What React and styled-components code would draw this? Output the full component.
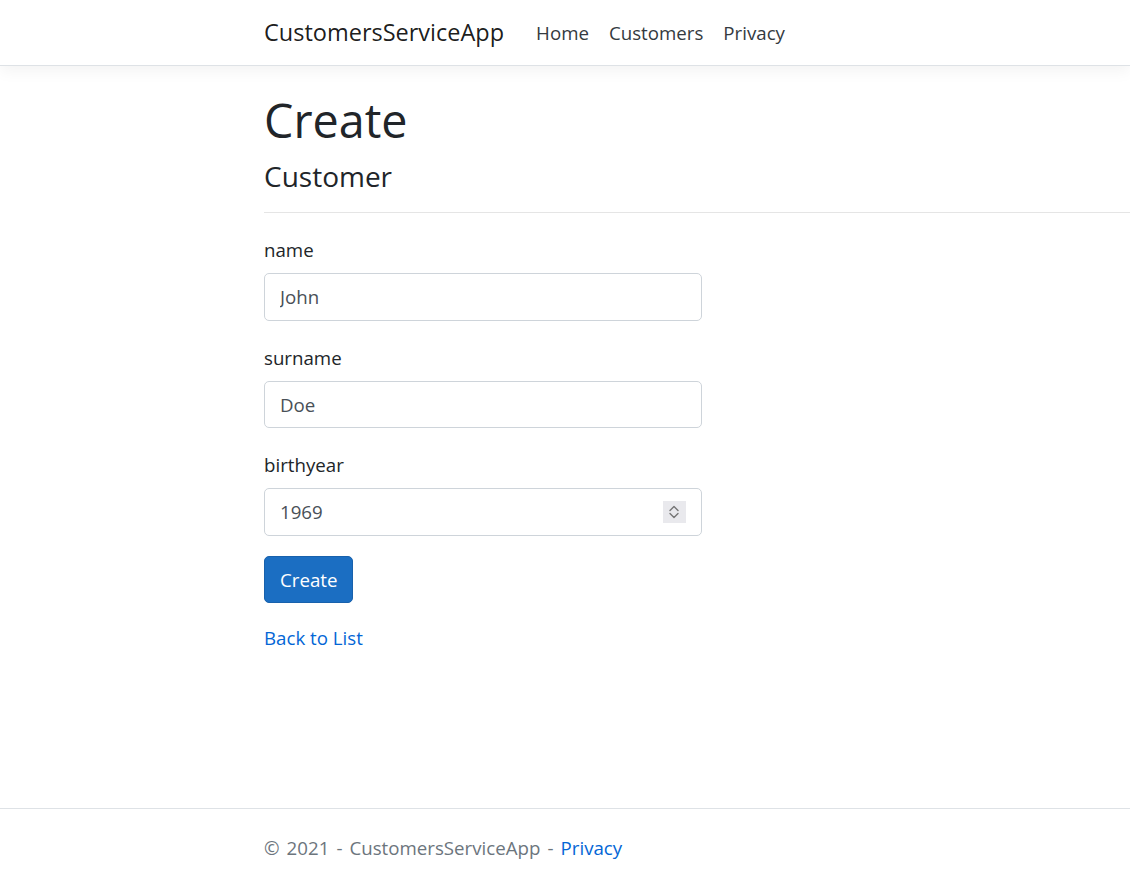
import React from "react";
import styled, { createGlobalStyle } from "styled-components";

const GlobalStyle = createGlobalStyle`
  *, *::before, *::after { box-sizing: border-box; }
  html, body { margin: 0; padding: 0; background: #fff; }
  body {
    font-family: "Open Sans", "Noto Sans", sans-serif;
    font-size: 18.7px;
    line-height: 30px;
    color: #212529;
    overflow-x: hidden;
  }
`;

const Page = styled.div`
  min-height: 100vh;
  display: flex;
  flex-direction: column;
`;

const Container = styled.div`
  padding-left: 264px;
`;

const Header = styled.header`
  flex-shrink: 0;
  height: 66px;
  background: #fff;
  border-bottom: 1px solid #dee2e6;
  box-shadow: 0 5px 15px rgba(0, 0, 0, 0.05);
`;

const NavBar = styled(Container)`
  height: 100%;
  display: flex;
  align-items: center;
`;

const Brand = styled.a`
  font-size: 23.5px;
  line-height: 37px;
  color: rgba(0, 0, 0, 0.9);
  text-decoration: none;
  margin-right: 22px;
`;

const NavList = styled.nav`
  display: flex;
  align-items: center;
`;

const NavLink = styled.a`
  padding: 0 10px;
  font-size: 18.7px;
  line-height: 30px;
  color: #343a40;
  text-decoration: none;
`;

const Main = styled(Container)`
  margin-top: 20px;
  flex: 1 0 auto;
`;

const Title = styled.h1`
  margin: 0 0 6px;
  padding-top: 4px;
  font-size: 46.7px;
  line-height: 60px;
  font-weight: 400;
`;

const Subtitle = styled.h4`
  margin: 0;
  padding-top: 2px;
  font-size: 28px;
  line-height: 36px;
  font-weight: 400;
`;

const Divider = styled.hr`
  border: 0;
  border-top: 1px solid rgba(0, 0, 0, 0.1);
  margin: 18px 0 20px;
`;

const FormColumn = styled.form`
  width: 438px;
`;

const FormGroup = styled.div`
  margin-bottom: 20px;
`;

const Label = styled.label`
  display: block;
  padding-top: 2px;
  margin-bottom: 8px;
  line-height: 30px;
`;

const FieldWrap = styled.div`
  position: relative;
`;

const Input = styled.input`
  display: block;
  width: 100%;
  height: 47.5px;
  padding: 0 15px;
  font-family: inherit;
  font-size: 18.7px;
  color: #495057;
  background: #fff;
  border: 1px solid #ced4da;
  border-radius: 5px;
  outline: none;
`;

const Spinner = styled.span`
  position: absolute;
  right: 16px;
  top: 50%;
  transform: translateY(-50%);
  width: 23px;
  height: 22px;
  background: #e9e9ed;
  display: flex;
  align-items: center;
  justify-content: center;
`;

const PrimaryButton = styled.button`
  height: 47.5px;
  padding: 0 15px;
  font-family: inherit;
  font-size: 18.7px;
  color: #fff;
  background: #1b6ec2;
  border: 1px solid #1861ac;
  border-radius: 5px;
  cursor: pointer;
`;

const Link = styled.a`
  color: #0366d6;
  text-decoration: none;
`;

const Footer = styled.footer`
  flex-shrink: 0;
  height: 74px;
  padding-top: 4px;
  line-height: 69px;
  border-top: 1px solid #dee2e6;
  color: #6c757d;
  white-space: nowrap;
  word-spacing: 2.2px;
`;

const SpinIcon = () => (
  <svg width="23" height="22" viewBox="0 0 23 22" fill="none">
    <path d="M7 9.5 L11 5.5 L15 9.5" stroke="#767676" strokeWidth="1.4" strokeLinecap="round" strokeLinejoin="round" />
    <path d="M7 12.5 L11 16.5 L15 12.5" stroke="#767676" strokeWidth="1.4" strokeLinecap="round" strokeLinejoin="round" />
  </svg>
);

const fields = [
  { name: "name", value: "John" },
  { name: "surname", value: "Doe" },
];

export default function App() {
  return (
    <>
      <GlobalStyle />
      <Page>
        <Header>
          <NavBar>
            <Brand href="#">CustomersServiceApp</Brand>
            <NavList>
              <NavLink href="#">Home</NavLink>
              <NavLink href="#">Customers</NavLink>
              <NavLink href="#">Privacy</NavLink>
            </NavList>
          </NavBar>
        </Header>
        <Main>
          <Title>Create</Title>
          <Subtitle>Customer</Subtitle>
          <Divider />
          <FormColumn onSubmit={(e) => e.preventDefault()}>
            {fields.map((f) => (
              <FormGroup key={f.name}>
                <Label htmlFor={f.name}>{f.name}</Label>
                <Input id={f.name} type="text" defaultValue={f.value} />
              </FormGroup>
            ))}
            <FormGroup>
              <Label htmlFor="birthyear">birthyear</Label>
              <FieldWrap>
                <Input id="birthyear" type="text" defaultValue="1969" />
                <Spinner>
                  <SpinIcon />
                </Spinner>
              </FieldWrap>
            </FormGroup>
            <FormGroup>
              <PrimaryButton type="submit">Create</PrimaryButton>
            </FormGroup>
          </FormColumn>
          <div>
            <Link href="#">Back to List</Link>
          </div>
        </Main>
        <Footer>
          <Container>
            © 2021 - CustomersServiceApp - <Link href="#">Privacy</Link>
          </Container>
        </Footer>
      </Page>
    </>
  );
}
